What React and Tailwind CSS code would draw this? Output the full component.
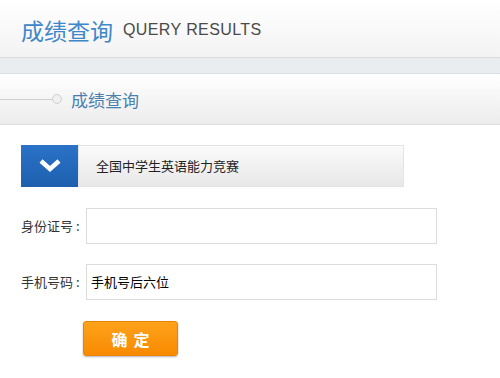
import React from "react";

export default function App() {
  const font = { fontFamily: '"Microsoft YaHei","Noto Sans CJK SC","Liberation Sans",sans-serif' };
  return (
    <div className="w-[500px] h-[378px] bg-white overflow-hidden relative" style={font}>
      {/* header */}
      <div className="h-[58px] bg-gradient-to-b from-white to-[#f3f3f3] border-b border-[#dcdcdc] flex items-center pl-[21px] gap-[10px] pt-[3px]">
        <span className="text-[23px] leading-none text-[#3f87c9]">成绩查询</span>
        <span className="text-[16px] leading-none text-[#4a4a4a] tracking-[0.4px]" style={{ fontFamily: '"Liberation Sans",Arial,sans-serif' }}>QUERY RESULTS</span>
      </div>
      <div className="h-[16px] bg-[#e9edf0] border-b border-[#d6dde3]" />
      {/* section bar */}
      <div className="h-[51px] bg-gradient-to-b from-white to-[#ececec] border-b border-[#dedede] flex items-center">
        <div className="w-[52px] h-px bg-[#cfcfcf]" />
        <div className="w-[10px] h-[10px] rounded-full border border-[#d0d0d0] bg-[#f0f0f0]" />
        <span className="ml-[9px] text-[17px] leading-none text-[#4a7fb0]">成绩查询</span>
      </div>
      {/* dropdown */}
      <div className="mt-[20px] ml-[21px] flex h-[42px] w-[383px]">
        <div className="w-[57px] h-full bg-gradient-to-b from-[#2a73c8] to-[#1d5fae] flex items-center justify-center">
          <svg width="22" height="14" viewBox="0 0 22 14">
            <path d="M2 2 L11 10 L20 2" fill="none" stroke="white" strokeWidth="4.5" strokeLinejoin="miter" />
          </svg>
        </div>
        <div className="flex-1 h-full bg-gradient-to-b from-[#fafafa] to-[#e8e8e8] border border-[#e4e4e4] flex items-center pl-[17px]">
          <span className="text-[13px] text-[#222]">全国中学生英语能力竞赛</span>
        </div>
      </div>
      {/* form */}
      <div className="mt-[21px] flex items-center h-[36px]">
        <span className="w-[86px] pl-[21px] text-[13px] text-[#333]">身份证号 :</span>
        <div className="w-[351px] h-full border border-[#dcdcdc] bg-white" />
      </div>
      <div className="mt-[20px] flex items-center h-[36px]">
        <span className="w-[86px] pl-[21px] text-[13px] text-[#333]">手机号码 :</span>
        <div className="w-[351px] h-full border border-[#dcdcdc] bg-white flex items-center pl-[4px]">
          <span className="text-[13px] text-black">手机号后六位</span>
        </div>
      </div>
      <div className="mt-[21px] ml-[83px] w-[95px] h-[35px] rounded-[3px] bg-gradient-to-b from-[#ffa21a] to-[#f88a00] border border-[#e98300] shadow-[0_1px_2px_rgba(0,0,0,0.3)] flex items-center justify-center">
        <span className="text-[16px] font-bold text-white tracking-[6px] pl-[6px]">确定</span>
      </div>
    </div>
  );
}
